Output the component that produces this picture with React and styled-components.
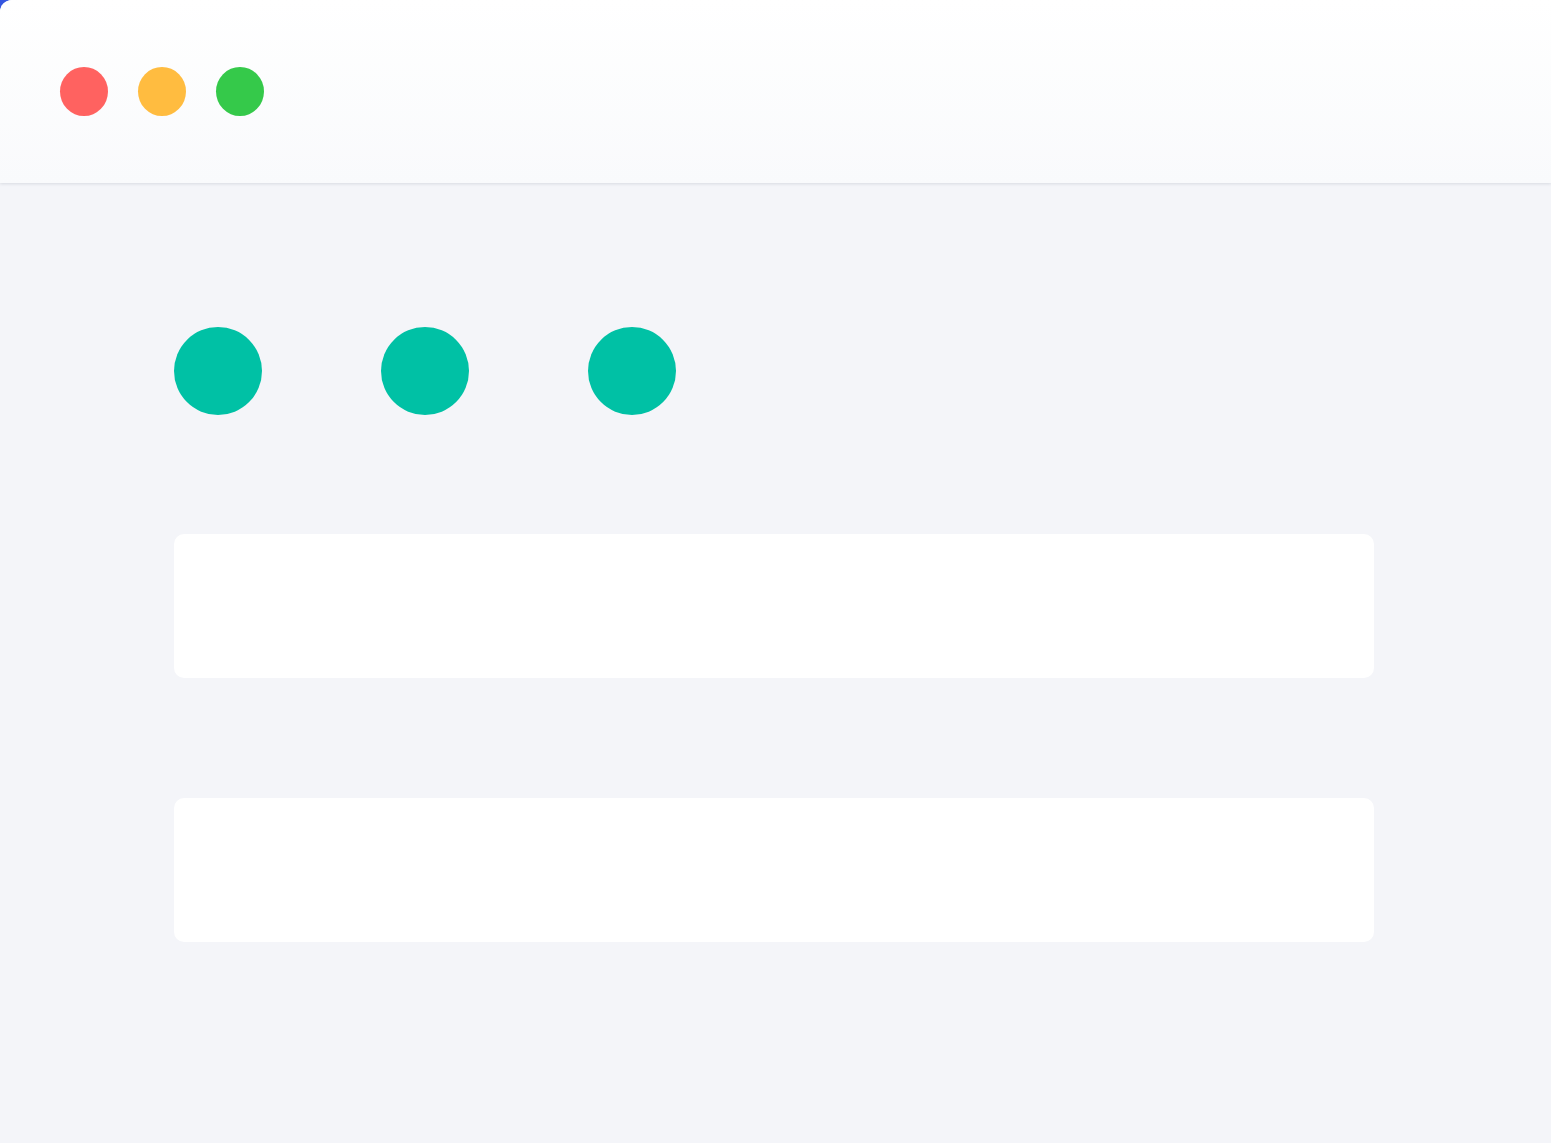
import React from "react";
import styled, { createGlobalStyle } from "styled-components";

const Global = createGlobalStyle`
  html, body { margin: 0; padding: 0; background: #3556e0; font-family: "Inter", "Liberation Sans", sans-serif; }
  #root { min-height: 100vh; }
`;

const Window = styled.div`
  width: 1551px;
  height: 1143px;
  background: #f4f5f9;
  border-top-left-radius: 12px;
  overflow: hidden;
  display: flex;
  flex-direction: column;
`;

const TitleBar = styled.div`
  height: 183px;
  flex: none;
  box-sizing: border-box;
  padding-left: 60px;
  display: flex;
  align-items: center;
  gap: 30px;
  background: linear-gradient(to bottom, #ffffff, #f9fafc);
  box-shadow: 0 1px 3px rgba(20, 30, 60, 0.12);
  position: relative;
  z-index: 1;
`;

const Light = styled.span`
  width: 48px;
  height: 49px;
  border-radius: 50%;
  background: ${(p) => p.$color};
  margin-bottom: 1px;
`;

const Content = styled.div`
  padding: 144px 0 0 174px;
  display: flex;
  flex-direction: column;
  gap: 120px;
`;

const DotRow = styled.div`
  display: flex;
  gap: 119px;
  margin-bottom: -1px;
`;

const Dot = styled.span`
  width: 88px;
  height: 88px;
  border-radius: 50%;
  background: #00c1a5;
`;

const Card = styled.div`
  width: 1200px;
  height: 144px;
  background: #ffffff;
  border-radius: 10px;
`;

export default function App() {
  return (
    <>
      <Global />
      <Window>
        <TitleBar>
          <Light $color="#ff6260" />
          <Light $color="#ffbc40" />
          <Light $color="#35c94a" />
        </TitleBar>
        <Content>
          <DotRow>
            <Dot />
            <Dot />
            <Dot />
          </DotRow>
          <Card />
          <Card />
        </Content>
      </Window>
    </>
  );
}
